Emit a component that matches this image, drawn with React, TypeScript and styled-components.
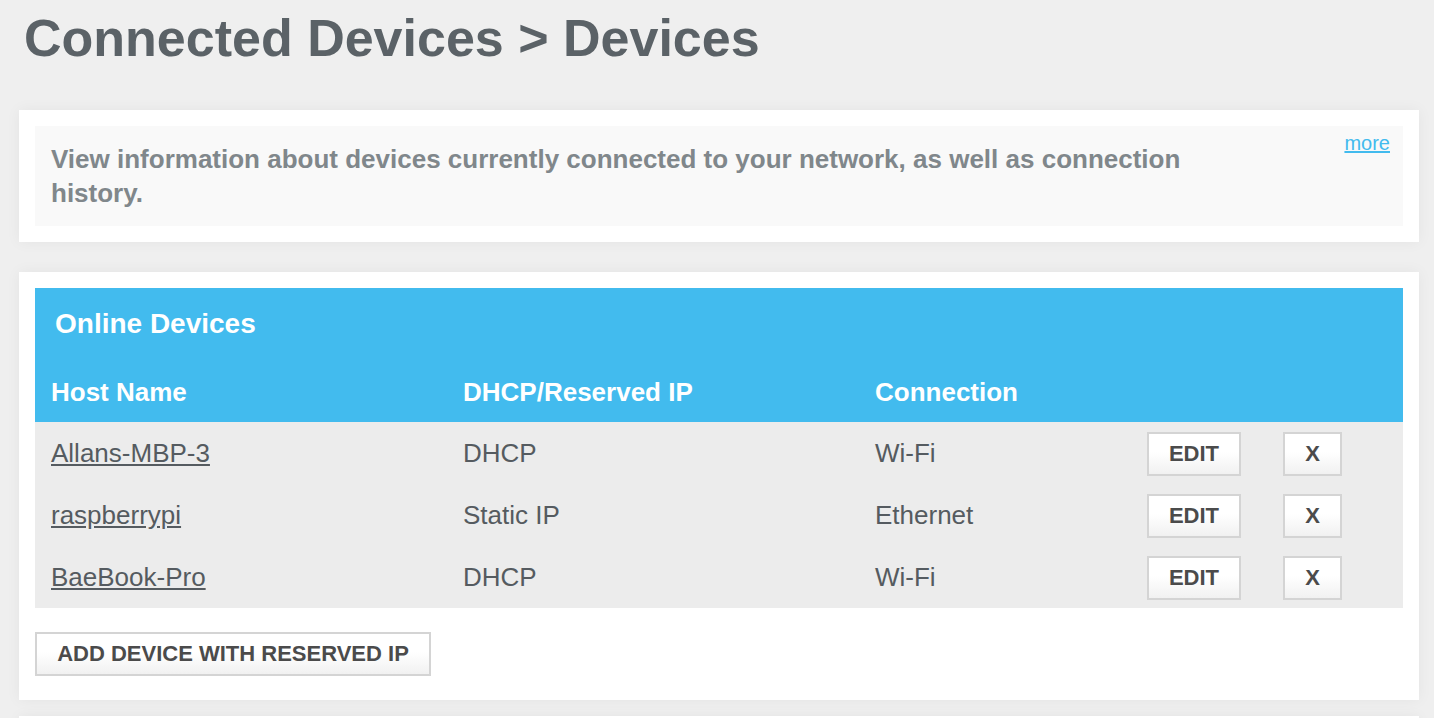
import React from "react";
import styled, { createGlobalStyle } from "styled-components";

const GlobalStyle = createGlobalStyle`
  html, body { margin: 0; padding: 0; background: #efefef; }
  body { font-family: "Liberation Sans", Arial, Helvetica, sans-serif; }
  * { box-sizing: border-box; }
`;

const Page = styled.div`
  padding: 0 15px 0 19px;
  overflow: hidden;
`;

const Title = styled.h1`
  margin: 8px 0 42px 5px;
  font-size: 52px;
  line-height: 60px;
  font-weight: 700;
  color: #5b6267;
`;

const Card = styled.section<{ $gap?: number }>`
  background: #ffffff;
  padding: 16px 16px 16px;
  margin-bottom: ${(p) => p.$gap ?? 30}px;
  box-shadow: 0 0 14px rgba(0, 0, 0, 0.05);
`;

const TableCard = styled(Card)`
  padding-bottom: 24px;
`;

const StubCard = styled(Card)`
  height: 40px;
`;

const InfoBox = styled.div`
  display: flex;
  justify-content: space-between;
  align-items: flex-start;
  background: #f9f9f9;
  padding: 16px 13px 16px 16px;
`;

const InfoText = styled.p`
  margin: 0;
  max-width: 1200px;
  font-size: 26px;
  line-height: 34px;
  font-weight: 700;
  color: #80878b;
`;

const MoreLink = styled.a`
  margin-top: -10px;
  font-size: 20px;
  line-height: 23px;
  color: #42bbee;
  text-decoration: underline;
  cursor: pointer;
`;

const BlueHeader = styled.div`
  background: #42bbee;
  padding: 20px 0 15px;
  color: #ffffff;
`;

const SectionTitle = styled.h2`
  margin: 0 0 38px;
  padding-left: 20px;
  font-size: 28px;
  line-height: 31px;
  font-weight: 700;
`;

const Grid = styled.div`
  display: grid;
  grid-template-columns: 412px 412px 272px 1fr;
  align-items: center;
`;

const HeadCell = styled.div`
  padding-left: 16px;
  font-size: 26px;
  line-height: 30px;
  font-weight: 700;
`;

const Row = styled(Grid)`
  height: 62px;
  background: #ececec;
`;

const Cell = styled.div`
  padding-left: 16px;
  font-size: 26px;
  line-height: 30px;
  color: #555b60;
`;

const HostLink = styled.a`
  color: #555b60;
  text-decoration: underline;
  cursor: pointer;
`;

const Actions = styled.div`
  display: flex;
  gap: 42px;
  padding-left: 16px;
  margin-top: 2px;
`;

const Button = styled.button<{ $w?: number }>`
  height: 44px;
  width: ${(p) => (p.$w ? `${p.$w}px` : "auto")};
  padding: 0 19px;
  border: 2px solid #d4d4d4;
  background: linear-gradient(#ffffff 0%, #ffffff 45%, #f1f1f1 100%);
  font-family: "Liberation Sans", Arial, Helvetica, sans-serif;
  font-size: 22px;
  font-weight: 700;
  color: #4b4b4b;
  cursor: pointer;
`;

const AddButton = styled(Button)`
  margin-top: 24px;
  width: 396px;
`;

const devices = [
  { host: "Allans-MBP-3", ip: "DHCP", conn: "Wi-Fi" },
  { host: "raspberrypi", ip: "Static IP", conn: "Ethernet" },
  { host: "BaeBook-Pro", ip: "DHCP", conn: "Wi-Fi" },
];

export default function App() {
  return (
    <>
      <GlobalStyle />
      <Page>
        <Title>Connected Devices &gt; Devices</Title>
        <Card>
          <InfoBox>
            <InfoText>
              View information about devices currently connected to your network, as well as connection history.
            </InfoText>
            <MoreLink>more</MoreLink>
          </InfoBox>
        </Card>
        <TableCard $gap={16}>
          <BlueHeader>
            <SectionTitle>Online Devices</SectionTitle>
            <Grid>
              <HeadCell>Host Name</HeadCell>
              <HeadCell>DHCP/Reserved IP</HeadCell>
              <HeadCell>Connection</HeadCell>
              <HeadCell />
            </Grid>
          </BlueHeader>
          {devices.map((d) => (
            <Row key={d.host}>
              <Cell>
                <HostLink>{d.host}</HostLink>
              </Cell>
              <Cell>{d.ip}</Cell>
              <Cell>{d.conn}</Cell>
              <Actions>
                <Button $w={94}>EDIT</Button>
                <Button $w={59}>X</Button>
              </Actions>
            </Row>
          ))}
          <AddButton>ADD DEVICE WITH RESERVED IP</AddButton>
        </TableCard>
        <StubCard />
      </Page>
    </>
  );
}
